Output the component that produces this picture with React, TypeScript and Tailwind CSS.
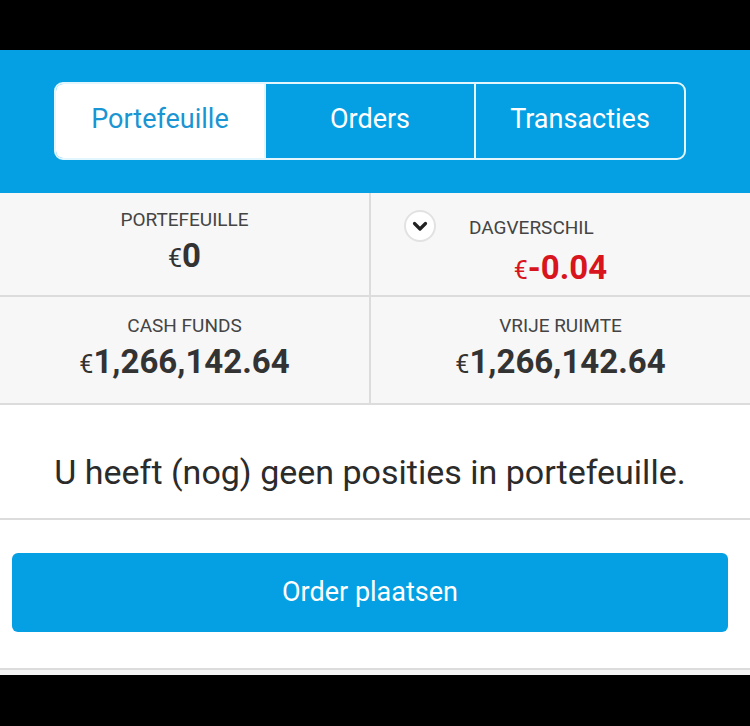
import { useState } from 'react';

const tabs = ['Portefeuille', 'Orders', 'Transacties'];

function Chevron() {
  return (
    <span className="flex h-[32px] w-[32px] items-center justify-center rounded-full border-2 border-[#e2e2e2] bg-white">
      <svg width="16" height="12" viewBox="0 0 16 12">
        <path d="M2.5 3.5 L8 9 L13.5 3.5" fill="none" stroke="#222" strokeWidth="3.2" strokeLinecap="round" strokeLinejoin="round" />
      </svg>
    </span>
  );
}

function Amount({ value, red }: { value: string; red?: boolean }) {
  return (
    <span className={`flex items-baseline leading-none ${red ? 'text-[#d8141c]' : 'text-[#333]'}`}>
      <span className="text-[25px]">€</span>
      <span className="text-[33px] font-bold">{value}</span>
    </span>
  );
}

function Stat({ label, value }: { label: string; value: string }) {
  return (
    <div className="flex flex-col items-center">
      <span className="text-[19px] leading-[22px] text-[#444]">{label}</span>
      <span className="mt-[8px]">
        <Amount value={value} />
      </span>
    </div>
  );
}

export default function App() {
  const [active, setActive] = useState(0);

  return (
    <div className="flex h-[726px] w-[750px] flex-col bg-black font-['Roboto',sans-serif]">
      <div className="h-[50px] shrink-0" />

      <div className="h-[143px] shrink-0 bg-[#059fe3] pl-[54px] pt-[32px]">
        <div className="flex h-[78px] w-[632px] overflow-hidden rounded-[9px] border-2 border-[#e4f6fd]">
          {tabs.map((t, i) => (
            <button
              key={t}
              type="button"
              onClick={() => setActive(i)}
              className={`flex flex-1 items-center justify-center pb-[4px] text-[27px] ${i > 0 ? 'border-l-2 border-[#e4f6fd]' : ''} ${
                active === i ? 'bg-white text-[#1a95d3]' : 'text-white'
              }`}
            >
              {t}
            </button>
          ))}
        </div>
      </div>

      <div className="grid shrink-0 grid-cols-[371px_1fr] bg-[#f7f7f7]">
        <div className="flex h-[104px] justify-center border-r-2 border-b-2 border-[#dcdcdc] pt-[16px]">
          <Stat label="PORTEFEUILLE" value="0" />
        </div>
        <div className="flex h-[104px] flex-col border-b-2 border-[#dcdcdc] pt-[17px]">
          <div className="flex items-center pl-[33px]">
            <Chevron />
            <span className="ml-[33px] pt-[4px] text-[19px] leading-[22px] text-[#444]">DAGVERSCHIL</span>
          </div>
          <div className="mt-[9px] flex justify-center">
            <Amount value="-0.04" red />
          </div>
        </div>
        <div className="flex h-[108px] justify-center border-r-2 border-b-2 border-[#dcdcdc] pt-[18px]">
          <Stat label="CASH FUNDS" value="1,266,142.64" />
        </div>
        <div className="flex h-[108px] justify-center border-b-2 border-[#dcdcdc] pt-[18px]">
          <Stat label="VRIJE RUIMTE" value="1,266,142.64" />
        </div>
      </div>

      <div className="flex h-[115px] shrink-0 items-center justify-center border-b-2 border-[#dcdcdc] bg-white pr-[10px] pt-[21px]">
        <p className="text-[34px] text-[#2b2b2b]">U heeft (nog) geen posities in portefeuille.</p>
      </div>

      <div className="flex h-[150px] shrink-0 flex-col border-b-2 border-[#dcdcdc] bg-white pl-[12px] pt-[33px]">
        <button type="button" className="flex h-[79px] w-[716px] items-center justify-center rounded-[6px] bg-[#059fe3] text-[27px] text-white">
          Order plaatsen
        </button>
      </div>
      <div className="h-[5px] shrink-0 bg-[#f4f4f4]" />
    </div>
  );
}
